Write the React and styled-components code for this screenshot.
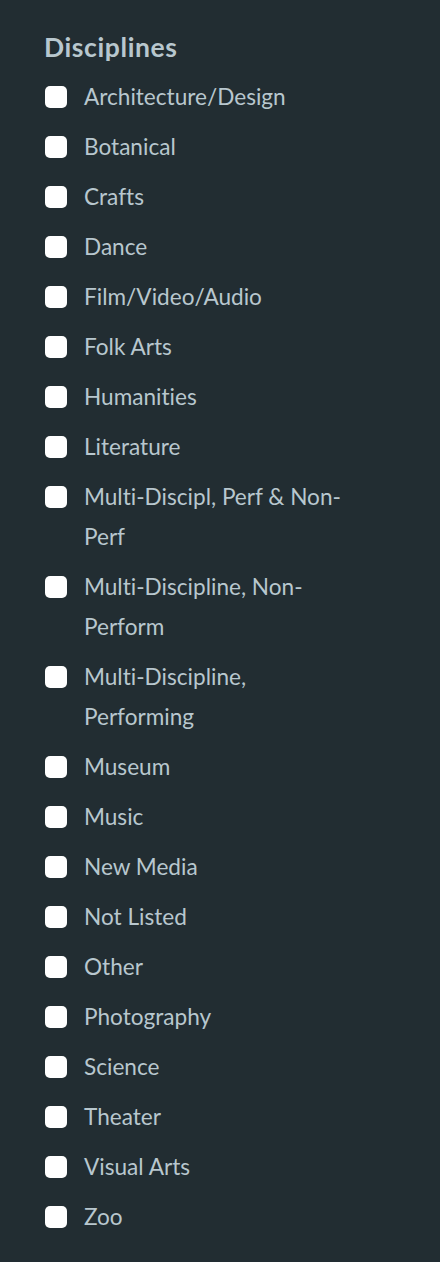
import React from "react";
import styled, { createGlobalStyle } from "styled-components";

const GlobalStyle = createGlobalStyle`
  html, body {
    margin: 0;
    padding: 0;
    background: #222d32;
  }
  body {
    font-family: Lato, "Noto Sans", "Liberation Sans", sans-serif;
    font-variant-ligatures: none;
  }
`;

const Panel = styled.div`
  width: 440px;
  min-height: 1262px;
  box-sizing: border-box;
  background: #222d32;
  padding: 27px 44px 0 44px;
  color: #b8c7ce;
`;

const Heading = styled.h4`
  margin: 0 0 10px 0;
  font-size: 26.5px;
  font-weight: 700;
  line-height: 40px;
  letter-spacing: 0.6px;
  color: #b8c7ce;
`;

const List = styled.ul`
  list-style: none;
  margin: 0;
  padding: 0;
  display: flex;
  flex-direction: column;
  gap: 10px;
`;

const Item = styled.li`
  display: flex;
  align-items: flex-start;
  gap: 17px;
`;

const Box = styled.span`
  flex: none;
  width: 22px;
  height: 22px;
  margin-top: 9px;
  margin-left: 1px;
  border-radius: 5px;
  background: #ffffff;
`;

const Label = styled.span`
  font-size: 22.6px;
  line-height: 40px;
  max-width: 268px;
  color: #b8c7ce;
`;

const disciplines = [
  "Architecture/Design",
  "Botanical",
  "Crafts",
  "Dance",
  "Film/Video/Audio",
  "Folk Arts",
  "Humanities",
  "Literature",
  "Multi-Discipl, Perf & Non-Perf",
  "Multi-Discipline, Non-Perform",
  "Multi-Discipline, Performing",
  "Museum",
  "Music",
  "New Media",
  "Not Listed",
  "Other",
  "Photography",
  "Science",
  "Theater",
  "Visual Arts",
  "Zoo",
];

export default function App() {
  return (
    <>
      <GlobalStyle />
      <Panel>
        <Heading>Disciplines</Heading>
        <List>
          {disciplines.map((d) => (
            <Item key={d}>
              <Box />
              <Label>{d}</Label>
            </Item>
          ))}
        </List>
      </Panel>
    </>
  );
}
